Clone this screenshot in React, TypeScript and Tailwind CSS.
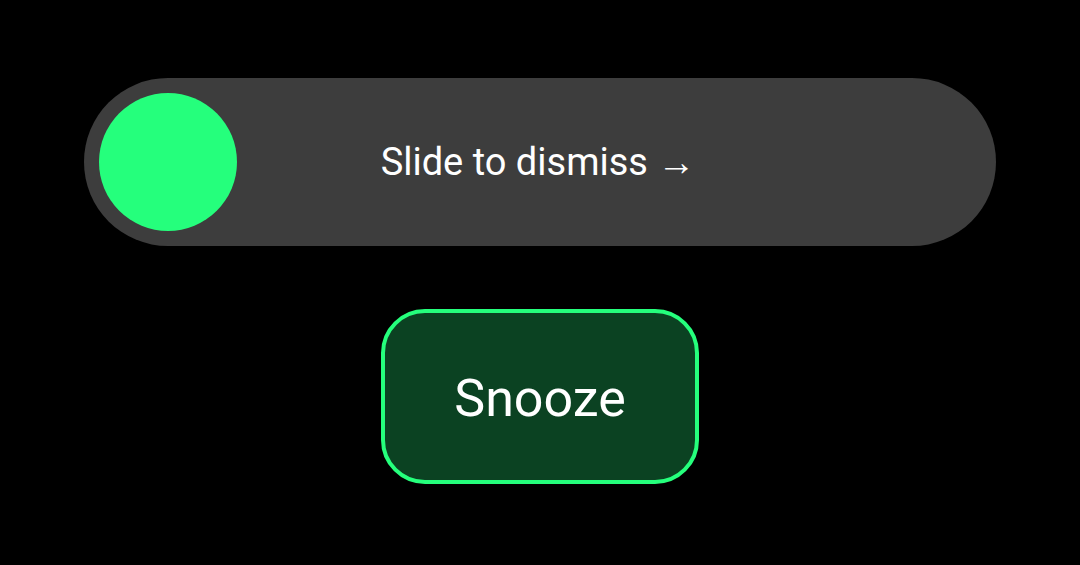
import React from 'react';

export default function App() {
    return (
        <div className="w-full h-[565px] bg-black flex flex-col items-center justify-center gap-[63px] pb-[3px] font-['Roboto',sans-serif]">
            {/* slide-to-dismiss track */}
            <div className="relative w-[912px] h-[168px] rounded-full bg-[#3d3d3d] flex items-center justify-center">
                <div className="absolute left-[15px] top-[15px] w-[138px] h-[138px] rounded-full bg-[#25ff7c]" />
                <span className="text-white text-[38px] leading-none pr-1">Slide to dismiss →</span>
            </div>

            <button
                type="button"
                className="w-[318px] h-[175px] rounded-[44px] border-4 border-[#25ff7c] bg-[#0b4222] text-white text-[52px] leading-none pt-1 flex items-center justify-center"
            >
                Snooze
            </button>
        </div>
    );
}
